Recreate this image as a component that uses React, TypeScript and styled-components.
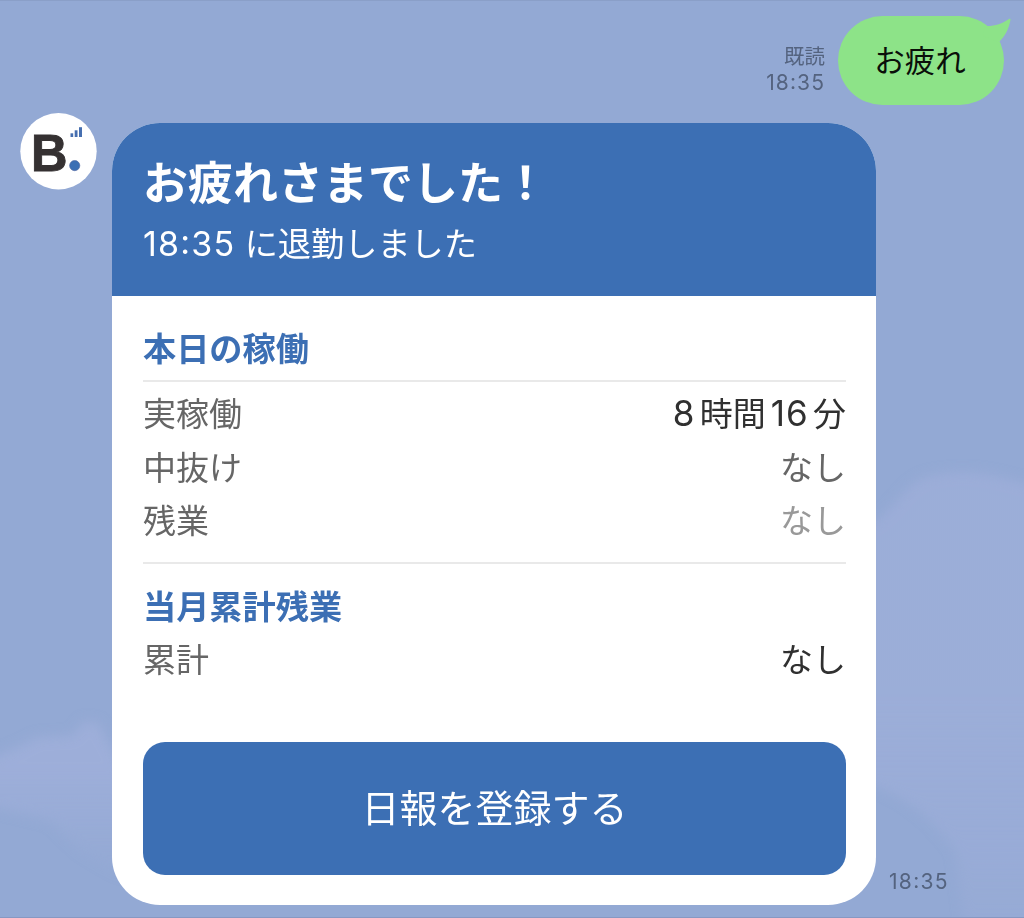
import React from "react";
import styled, { createGlobalStyle } from "styled-components";

const blue = "#3c6fb4";

const GlobalStyle = createGlobalStyle`
  *, *::before, *::after { box-sizing: border-box; }
  body {
    margin: 0;
    background: #93a9d4;
    font-family: Inter, "Noto Sans CJK JP", sans-serif;
    overflow: hidden;
  }
`;

const Chat = styled.main`
  position: relative;
  isolation: isolate;
  width: 1024px;
  height: 918px;
  padding-top: 15px;
  border-top: 1px solid #8a9fc8;
  border-bottom: 1px solid #8798c2;
  overflow: hidden;
`;

const Sky = styled.svg`
  position: absolute;
  inset: 0;
  z-index: -1;
`;

const SentRow = styled.div`
  display: flex;
  justify-content: flex-end;
  align-items: flex-end;
  gap: 13px;
  height: 89px;
  padding-right: 20px;
`;

const Meta = styled.div<{ $bottom: number }>`
  padding-bottom: ${(p) => p.$bottom}px;
  color: #54637f;
  font-size: 20.5px;
  line-height: 26px;
  text-align: right;
`;

const Digits = styled.span<{ $size: number; $spacing: number }>`
  font-size: ${(p) => p.$size}px;
  letter-spacing: ${(p) => p.$spacing}px;
  line-height: 1;
`;

const Colon = styled.span`
  vertical-align: 0.07em;
  line-height: 1;
`;

const Bubble = styled.div`
  position: relative;
  width: 166px;
  height: 89px;
  border-radius: 44.5px;
  background: #8de388;
  color: #0a0f0a;
  font-size: 30.5px;
  line-height: 90px;
  text-align: center;
  text-indent: -2px;
`;

const Tail = styled.svg`
  position: absolute;
  top: 0;
  right: -7px;
`;

const ReceivedRow = styled.div`
  display: flex;
  align-items: flex-start;
  margin-top: 18px;
  padding-left: 20px;
`;

const Avatar = styled.svg`
  flex: none;
  margin: -10px 15px 0 0;
`;

const Card = styled.article`
  flex: none;
  width: 764px;
  height: 782px;
  border-radius: 48px;
  background: #fff;
  overflow: hidden;
`;

const CardHeader = styled.header`
  height: 173px;
  padding: 31px 31px 0;
  background: ${blue};
  color: #fff;
`;

const Title = styled.h1`
  margin: 0;
  font-size: 45px;
  font-weight: 700;
  line-height: 60px;
`;

const Subtitle = styled.p`
  margin: 5px 0 0;
  font-size: 33.2px;
  line-height: 50px;
`;

const CardBody = styled.div`
  padding: 28px 30px 0 31px;
`;

const Section = styled.section`
  & + & {
    margin-top: 13px;
    padding-top: 18px;
    border-top: 2px solid #e9e9e9;
  }
`;

const SectionTitle = styled.h2<{ $ruled?: boolean }>`
  margin: 0;
  height: ${(p) => (p.$ruled ? 58 : 52)}px;
  margin-bottom: ${(p) => (p.$ruled ? 6 : 0)}px;
  border-bottom: ${(p) => (p.$ruled ? "2px solid #e9e9e9" : "none")};
  color: ${blue};
  font-size: 33.2px;
  font-weight: 700;
  line-height: 51px;
`;

const Row = styled.div`
  display: flex;
  justify-content: space-between;
  height: 53.5px;
  color: #666;
  font-size: 33px;
  line-height: 53.5px;
`;

const Value = styled.span<{ $color: string }>`
  color: ${(p) => p.$color};
`;

const Count = styled(Digits)<{ $lead?: boolean }>`
  margin: 0 4.5px 0 ${(p) => (p.$lead ? 0 : 5)}px;
`;

const ReportButton = styled.button`
  display: block;
  width: 100%;
  height: 133px;
  margin-top: 55px;
  padding: 0;
  border: 0;
  border-radius: 22px;
  background: ${blue};
  color: #fff;
  font: inherit;
  font-size: 38px;
  line-height: 133px;
`;

const SentTime = styled(Meta)`
  align-self: flex-end;
  margin-left: 13px;
`;

function Clouds() {
  return (
    <Sky width="1024" height="918" viewBox="0 0 1024 918" aria-hidden="true">
      <defs>
        <filter id="soft" x="-20%" y="-20%" width="140%" height="140%">
          <feGaussianBlur stdDeviation="6" />
        </filter>
        <linearGradient id="fadeLeft" x1="0" y1="0" x2="0" y2="1">
          <stop offset="0.3" stopColor="#9daed9" />
          <stop offset="1" stopColor="#9daed9" stopOpacity="0" />
        </linearGradient>
        <linearGradient id="fadeRight" x1="0" y1="0" x2="0" y2="1">
          <stop offset="0.5" stopColor="#9daed9" />
          <stop offset="1" stopColor="#9daed9" stopOpacity="0.4" />
        </linearGradient>
      </defs>
      <g filter="url(#soft)">
        <path
          d="M-20 762L20 745L38 736L72 735L84 720L98 722L125 770V880L80 850L50 820L-20 803Z"
          fill="url(#fadeLeft)"
        />
        <path
          d="M860 530C900 510 902 478 935 474C980 465 1010 480 1040 486V930H965L955 850C930 815 900 790 860 782Z"
          fill="url(#fadeRight)"
          opacity=".9"
        />
      </g>
    </Sky>
  );
}

function BrandAvatar() {
  return (
    <Avatar width="77" height="77" viewBox="0 0 77 77" role="img" aria-label="B.">
      <circle cx="38.5" cy="38.2" r="38.2" fill="#fff" />
      <text
        x="11"
        y="58"
        fill="#353132"
        stroke="#353132"
        strokeWidth="0.9"
        fontFamily="Liberation Sans, sans-serif"
        fontSize="51.5"
        fontWeight="700"
        textLength="36.5"
        lengthAdjust="spacingAndGlyphs"
      >
        B
      </text>
      <circle cx="54.7" cy="52.6" r="5.1" fill="#3c6fb4" stroke="#4a5f9c" strokeWidth="0.6" />
      <g fill="#466fb0">
        <rect x="50.5" y="20.3" width="2.7" height="3.7" />
        <rect x="54.7" y="17.3" width="2.8" height="6.7" />
        <rect x="59" y="14.2" width="3" height="9.8" />
      </g>
    </Avatar>
  );
}

function Time({ size, spacing }: { size: number; spacing: number }) {
  return (
    <Digits $size={size} $spacing={spacing}>
      18<Colon>:</Colon>35
    </Digits>
  );
}

export default function App() {
  return (
    <>
      <GlobalStyle />
      <Chat>
        <Clouds />
        <SentRow>
          <Meta $bottom={9}>
            <div>既読</div>
            <Time size={21} spacing={1.1} />
          </Meta>
          <Bubble>
            お疲れ
            <Tail width="40" height="40" viewBox="0 0 40 40" aria-hidden="true">
              <path d="M14 10C23 10.5 31 8 38 3C39 2.5 39.7 2.8 39.5 4C37.5 14 34 20 28 26L12 20Z" fill="#8de388" />
            </Tail>
          </Bubble>
        </SentRow>
        <ReceivedRow>
          <BrandAvatar />
          <Card>
            <CardHeader>
              <Title>お疲れさまでした！</Title>
              <Subtitle>
                <Time size={34} spacing={1.2} /> に退勤しました
              </Subtitle>
            </CardHeader>
            <CardBody>
              <Section>
                <SectionTitle $ruled>本日の稼働</SectionTitle>
                <Row>
                  <span>実稼働</span>
                  <Value $color="#303030">
                    <Count $lead $size={35} $spacing={0.9}>8</Count>時間
                    <Count $size={35} $spacing={0.9}>16</Count>分
                  </Value>
                </Row>
                <Row>
                  <span>中抜け</span>
                  <Value $color="#666">なし</Value>
                </Row>
                <Row>
                  <span>残業</span>
                  <Value $color="#999">なし</Value>
                </Row>
              </Section>
              <Section>
                <SectionTitle>当月累計残業</SectionTitle>
                <Row>
                  <span>累計</span>
                  <Value $color="#303030">なし</Value>
                </Row>
              </Section>
              <ReportButton type="button">日報を登録する</ReportButton>
            </CardBody>
          </Card>
          <SentTime $bottom={10}>
            <Time size={21} spacing={1.3} />
          </SentTime>
        </ReceivedRow>
      </Chat>
    </>
  );
}
